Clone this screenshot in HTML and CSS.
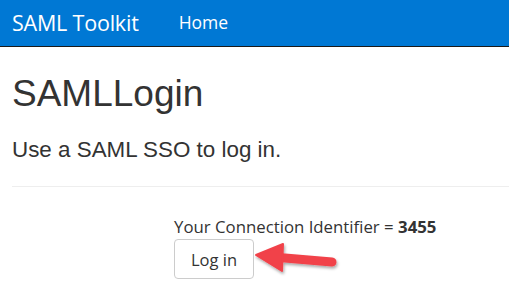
FILE: index.html
```html
<!DOCTYPE html>
<html lang="en">
<head>
    <meta charset="UTF-8">
    <title>SAMLLogin</title>
    <link rel="stylesheet" href="styles.css">
</head>
<body>
    <nav class="navbar">
        <a class="brand" href="#">SAML Toolkit</a>
        <a class="nav-link" href="#">Home</a>
    </nav>

    <div class="container">
        <h1 class="page-title">SAMLLogin</h1>
        <p class="lead">Use a SAML SSO to log in.</p>
        <hr class="divider">

        <form class="login-form">
            <p class="conn-id">Your Connection Identifier = <strong>3455</strong></p>
            <div class="button-row">
                <button type="button" class="login-button">Log in</button>
                <svg class="arrow" viewBox="0 0 90 40" width="90" height="40">
                    <defs>
                        <filter id="shadow" x="-20%" y="-40%" width="140%" height="180%">
                            <feDropShadow dx="1" dy="2" stdDeviation="1.5" flood-color="#000" flood-opacity="0.35"/>
                        </filter>
                    </defs>
                    <g filter="url(#shadow)" fill="#f1424a" stroke="#f1424a" stroke-linejoin="round" stroke-linecap="round">
                        <path d="M27 18.5 L80 23" stroke-width="9" fill="none"/>
                        <path d="M4 16 L31 5 L30 32 Z" stroke-width="2"/>
                    </g>
                </svg>
            </div>
        </form>
    </div>
</body>
</html>
```

FILE: styles.css
```css
* {
    margin: 0;
    padding: 0;
    box-sizing: border-box;
}

body {
    font-family: "Liberation Sans", Arial, sans-serif;
    color: #333;
    background: #fff;
}

/* --- Barra superior --- */
.navbar {
    display: flex;
    align-items: center;
    height: 47px;
    padding: 0 12px 2px;
    background: #0078d4;
    border-bottom: 1px solid #1a1a1a;
    font-family: "Open Sans", sans-serif;
}
.brand {
    color: #fff;
    text-decoration: none;
    font-size: 21.5px;
    letter-spacing: -0.2px;
}
.nav-link {
    color: #fff;
    text-decoration: none;
    font-size: 17.5px;
    margin-left: 40px;
}

/* --- Conteúdo --- */
.container {
    padding: 0 0 0 12px;
}
.page-title {
    font-size: 37px;
    font-weight: 400;
    margin-top: 27px;
    line-height: 40px;
}
.lead {
    font-size: 22.4px;
    margin-top: 22px;
    line-height: 28px;
}
.divider {
    border: none;
    border-top: 1px solid #eee;
    margin-top: 22px;
}

/* --- Formulário --- */
.login-form {
    padding-left: 162px;
    margin-top: 28px;
    font-family: "Open Sans", sans-serif;
}
.conn-id {
    font-size: 16.8px;
    line-height: 24px;
    color: #333;
}
.conn-id strong {
    font-weight: 700;
}
.button-row {
    display: flex;
    align-items: flex-start;
}
.login-button {
    font-family: "Open Sans", sans-serif;
    font-size: 16.5px;
    color: #333;
    background: #fff;
    border: 1px solid #ccc;
    border-radius: 4px;
    width: 80px;
    height: 40px;
}
.arrow {
    margin-left: -2px;
}
```
